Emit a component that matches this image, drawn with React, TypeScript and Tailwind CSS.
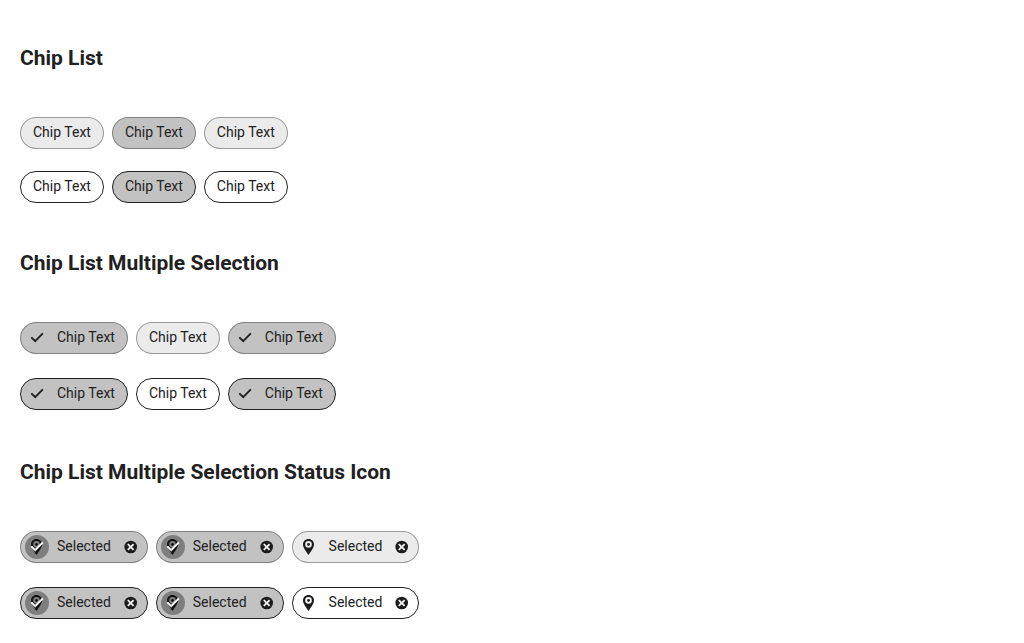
import { useState } from "react";
import clsx from "clsx";

type Variant = "filled" | "outlined";

function chipColors(variant: Variant, selected: boolean) {
  return clsx(
    "h-8 rounded-full border text-sm text-[#212121] whitespace-nowrap",
    variant === "filled" ? "border-[#212121]/40" : "border-[#212121]",
    selected ? "bg-[#c2c2c2]" : variant === "filled" ? "bg-[#ebebeb]" : "bg-white",
  );
}

function CheckIcon() {
  return (
    <svg viewBox="0 0 24 24" className="size-6" fill="none" stroke="currentColor" strokeWidth="1.9" aria-hidden="true">
      <path d="M6.3 11.3 L10.2 15.2 L17.8 7.4" />
    </svg>
  );
}

function PinIcon() {
  return (
    <svg viewBox="0 0 24 24" className="size-6" aria-hidden="true">
      <path
        fill="#1c1c1c"
        fillRule="evenodd"
        d="M11.5 4 C8.3 4 6 6.4 6 9.4 C6 12.8 9.2 16.2 11.5 20 C13.8 16.2 17 12.8 17 9.4 C17 6.4 14.7 4 11.5 4 Z M11.5 6.1 A3.3 3.3 0 1 1 11.5 12.7 A3.3 3.3 0 1 1 11.5 6.1 Z"
      />
      <circle cx="11.5" cy="9.4" r="1.4" fill="#1c1c1c" />
    </svg>
  );
}

function RemoveIcon() {
  return (
    <svg viewBox="0 0 14 14" className="size-3.5" aria-hidden="true">
      <circle cx="6.7" cy="7" r="6.3" fill="#1c1c1c" />
      <path d="M3.8 4.1 L9.6 9.9 M9.6 4.1 L3.8 9.9" stroke="#f0f0f0" strokeWidth="1.9" />
    </svg>
  );
}

function TextChips({ variant, initial, multiple = false }: { variant: Variant; initial: number[]; multiple?: boolean }) {
  const [selected, setSelected] = useState(initial);
  const toggle = (i: number) =>
    setSelected((s) => (multiple ? (s.includes(i) ? s.filter((n) => n !== i) : [...s, i]) : [i]));
  return (
    <ul className="flex flex-wrap gap-2">
      {[0, 1, 2].map((i) => {
        const on = selected.includes(i);
        const check = multiple && on;
        return (
          <li key={i}>
            <button
              type="button"
              aria-pressed={on}
              onClick={() => toggle(i)}
              className={clsx("flex items-center pr-3", check ? "gap-2 pl-1" : "pl-3", chipColors(variant, on))}
            >
              {check && <CheckIcon />}
              <span className="pb-0.5">Chip Text</span>
            </button>
          </li>
        );
      })}
    </ul>
  );
}

function StatusChips({ variant }: { variant: Variant }) {
  const [selected, setSelected] = useState([0, 1]);
  const [items, setItems] = useState([0, 1, 2]);
  const toggle = (i: number) =>
    setSelected((s) => (s.includes(i) ? s.filter((n) => n !== i) : [...s, i]));
  return (
    <ul className="flex flex-wrap gap-2">
      {items.map((i) => {
        const on = selected.includes(i);
        return (
          <li key={i} className={clsx("flex items-center pr-[9px]", chipColors(variant, on))}>
            <button type="button" aria-pressed={on} onClick={() => toggle(i)} className="flex items-center gap-2 pl-1">
              <span className="relative size-6">
                <PinIcon />
                {on && (
                  <span className="absolute inset-0 rounded-full bg-black/35 text-white">
                    <CheckIcon />
                  </span>
                )}
              </span>
              <span className="pb-0.5">Selected</span>
            </button>
            <button
              type="button"
              aria-label="Remove"
              onClick={() => setItems((s) => s.filter((n) => n !== i))}
              className="ml-[13px]"
            >
              <RemoveIcon />
            </button>
          </li>
        );
      })}
    </ul>
  );
}

const heading = "mb-[47px] text-[21px] leading-6 font-bold";

export default function App() {
  return (
    <main className="flex flex-col gap-12 bg-white px-5 pt-[46px] pb-6 font-['Roboto',sans-serif] text-[#212121]">
      <section>
        <h2 className={heading}>Chip List</h2>
        <div className="flex flex-col gap-[22px]">
          <TextChips variant="filled" initial={[1]} />
          <TextChips variant="outlined" initial={[1]} />
        </div>
      </section>
      <section>
        <h2 className={heading}>Chip List Multiple Selection</h2>
        <div className="flex flex-col gap-6">
          <TextChips variant="filled" initial={[0, 2]} multiple />
          <TextChips variant="outlined" initial={[0, 2]} multiple />
        </div>
      </section>
      <section className="pt-0.5">
        <h2 className={heading}>Chip List Multiple Selection Status Icon</h2>
        <div className="flex flex-col gap-6">
          <StatusChips variant="filled" />
          <StatusChips variant="outlined" />
        </div>
      </section>
    </main>
  );
}
